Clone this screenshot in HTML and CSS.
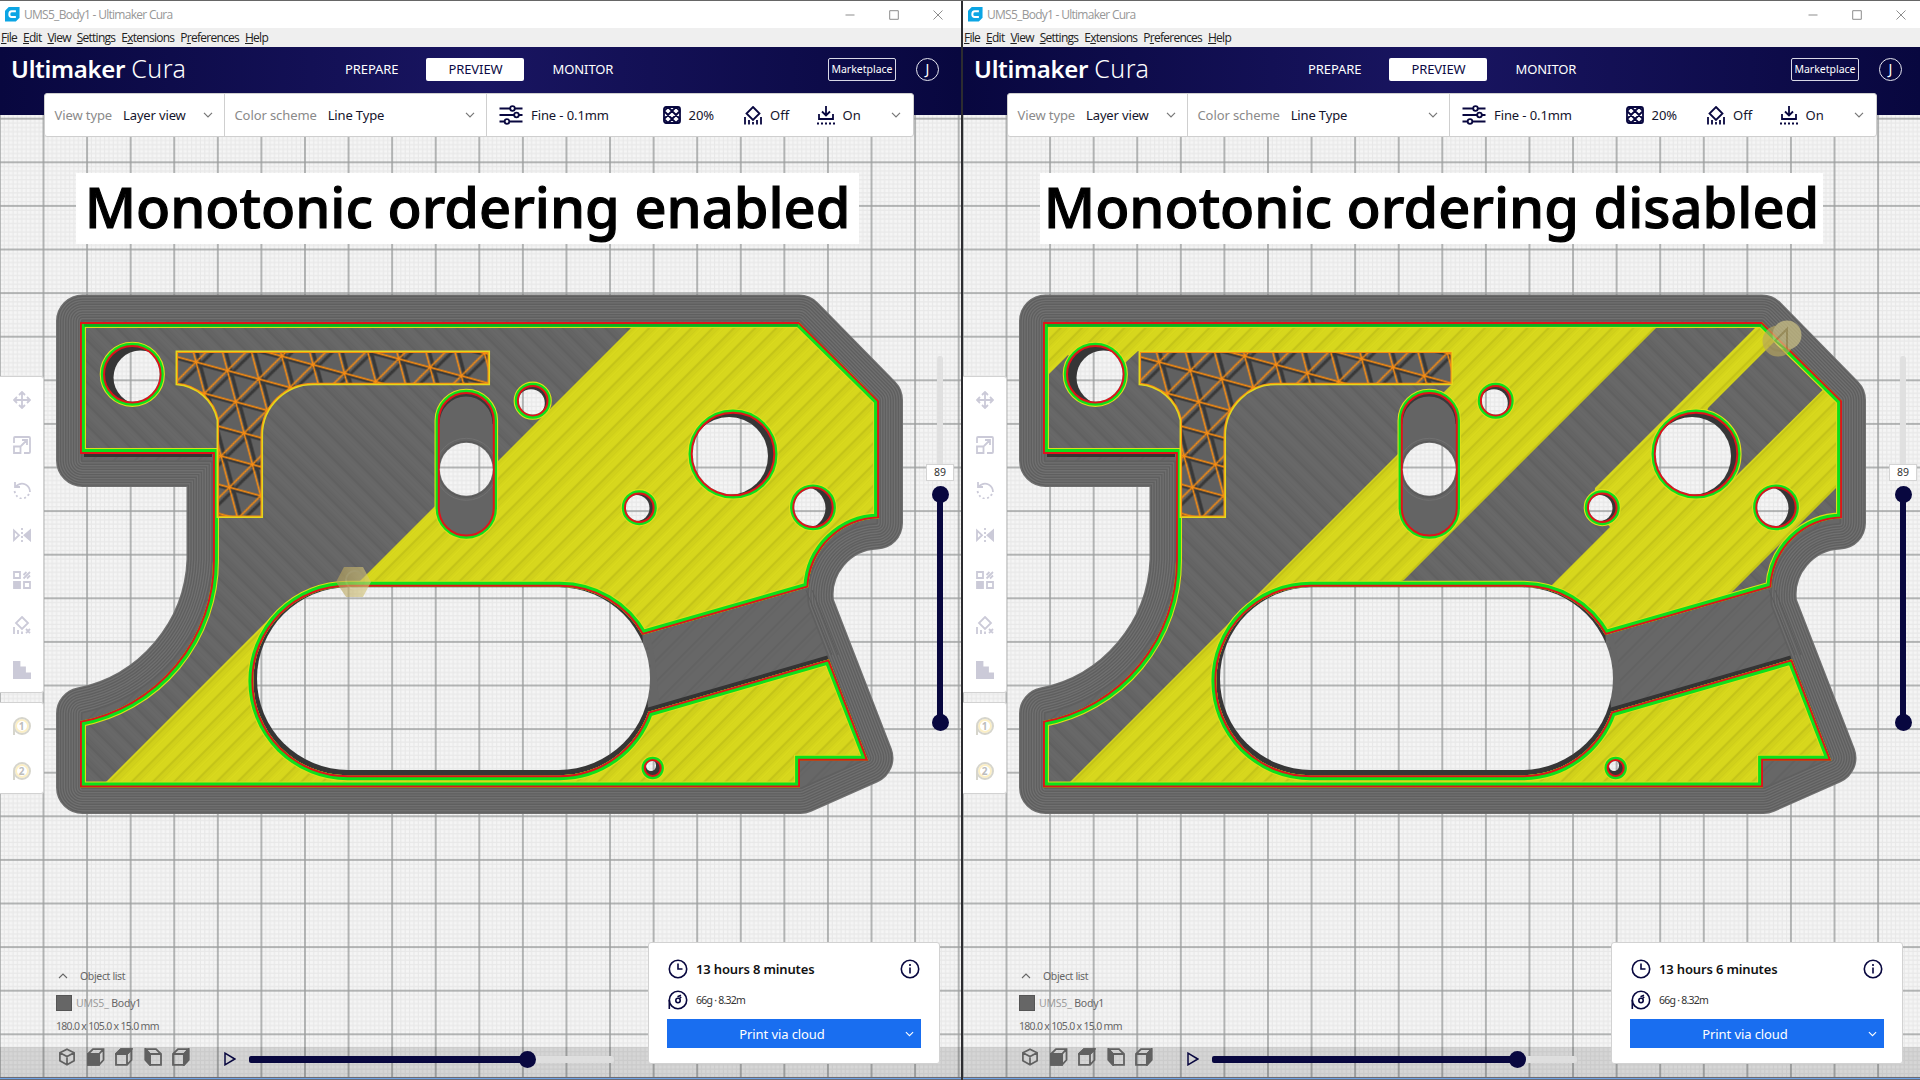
FILE: index.html
```html
<!DOCTYPE html>
<html lang="en">
<head>
<meta charset="utf-8">
<title>Ultimaker Cura</title>
<link rel="stylesheet" href="styles.css">
</head>
<body>
<svg class="defs" width="0" height="0" aria-hidden="true">
  <defs>
    <pattern id="plate" width="43.58" height="43.6" patternUnits="userSpaceOnUse" patternTransform="translate(43.5 162.3)">
      <path class="grid-minor" d="M4.36 0V43.6M8.72 0V43.6M13.07 0V43.6M17.43 0V43.6M21.79 0V43.6M26.15 0V43.6M30.5 0V43.6M34.86 0V43.6M39.22 0V43.6M0 4.36H43.6M0 8.72H43.6M0 13.08H43.6M0 17.44H43.6M0 21.8H43.6M0 26.16H43.6M0 30.52H43.6M0 34.88H43.6M0 39.24H43.6"/>
      <path class="grid-major" d="M0 0V43.6M43.58 0V43.6M0 0H43.6M0 43.6H43.6"/>
    </pattern>
    <pattern id="skin-yellow" width="15" height="15" patternUnits="userSpaceOnUse" patternTransform="rotate(45)">
      <rect width="15" height="15" fill="#d5d51b"/>
      <path d="M1 0V15" stroke="#b4b415" stroke-width="1"/>
      <path d="M3 0V15M5.2 0V15" stroke="#cbcb19" stroke-width="1"/>
      <path d="M8.5 0V15M11 0V15M13 0V15" stroke="#dada1e" stroke-width="1"/>
    </pattern>
    <pattern id="skin-gray" width="15" height="15" patternUnits="userSpaceOnUse" patternTransform="rotate(-45)">
      <rect width="15" height="15" fill="#666"/>
      <path d="M1 0V15" stroke="#5a5a5a" stroke-width="1"/>
      <path d="M3 0V15M5.2 0V15" stroke="#616161" stroke-width="1"/>
      <path d="M9 0V15M12 0V15" stroke="#6a6a6a" stroke-width="1"/>
    </pattern>
    <pattern id="skin-floor" width="15" height="15" patternUnits="userSpaceOnUse" patternTransform="rotate(45)">
      <rect width="15" height="15" fill="#676767"/>
      <path d="M1 0V15" stroke="#5c5c5c" stroke-width="1"/>
      <path d="M5 0V15" stroke="#626262" stroke-width="1"/>
    </pattern>
    <pattern id="truss-line" width="100" height="100" patternUnits="userSpaceOnUse" patternTransform="matrix(.3133 .085 .0833 .3133 176.2 342.1)">
      <path d="M50 0V100M0 50H100" stroke="#f78c12" stroke-width="5.600"/>
      <path d="M-10 110L110 -10M-10 10L10 -10M90 110L110 90" stroke="#f78c12" stroke-width="4"/>
    </pattern>
    <pattern id="truss-shade" width="100" height="100" patternUnits="userSpaceOnUse" patternTransform="matrix(.3133 .085 .0833 .3133 180.4 344.6)">
      <path d="M50 0V100M0 50H100" stroke="#383838" stroke-width="12"/>
      <path d="M-10 110L110 -10M-10 10L10 -10M90 110L110 90" stroke="#383838" stroke-width="8"/>
    </pattern>
    <linearGradient id="hexa"><stop offset="0" stop-color="#b5a15a"/><stop offset="1" stop-color="#d8ca7e"/></linearGradient>

    <path id="outline" d="M80 322H799L879 400.700V518.300A72 72 0 0 0 808.300 587.300L642.300 635A94.300 94.300 0 0 0 560 586.700H347.600A94.300 94.300 0 0 0 347.600 775.300H560A94.300 94.300 0 0 0 648.300 711.700L829 659.300L868.300 760.700H800V787.500H80V721A163 163 0 0 0 213 560V454H80Z"/>
    <path id="base" d="M82.500 321H799L876.500 400V523A72 72 0 0 0 808 606L867 758L800.500 787.500H82.500V713.500A163 163 0 0 0 213 560V460.500H82.500Z"/>
    <path id="slot" d="M642.300 635A94.300 94.300 0 0 0 560 586.700H347.600A94.300 94.300 0 0 0 347.600 775.300H560A94.300 94.300 0 0 0 648.300 711.700Z"/>
    <g id="holes">
      <circle cx="132.300" cy="374.300" r="28.300"/>
      <circle cx="532.700" cy="400.700" r="14.800"/>
      <circle cx="733" cy="454" r="41.300"/>
      <circle cx="639.300" cy="507.700" r="14.300"/>
      <circle cx="813" cy="507.300" r="19.700"/>
      <circle cx="652.700" cy="768" r="8"/>
    </g>
    <rect id="capsule" x="438.800" y="393" width="55" height="142.500" rx="27.500"/>
    <path id="truss" d="M176.300 351.300H489.300V384.500H315A51 51 0 0 0 262.300 435V517.300H217.300V420A45 45 0 0 0 176.300 384.500Z"/>
    <clipPath id="clip-body"><use href="#outline"/></clipPath>
    <clipPath id="clip-truss"><use href="#truss"/></clipPath>
    <clipPath id="clip-capsule"><use href="#capsule"/></clipPath>
    <clipPath id="clip-holes">
      <circle cx="132.300" cy="374.300" r="27.300"/><circle cx="532.700" cy="400.700" r="13.800"/><circle cx="733" cy="454" r="40.300"/><circle cx="639.300" cy="507.700" r="13.300"/><circle cx="813" cy="507.300" r="18.700"/><circle cx="652.700" cy="768" r="7"/>
    </clipPath>
    <mask id="openings" maskUnits="userSpaceOnUse" x="0" y="0" width="962" height="1080">
      <rect width="962" height="1080" fill="#fff"/>
      <rect x="257" y="587.300" width="393" height="182.700" rx="91.300"/>
      <circle cx="466.300" cy="469.300" r="26.500"/>
      <g clip-path="url(#clip-holes)">
        <circle cx="140.500" cy="377.500" r="27"/><circle cx="531" cy="403" r="13.800"/><circle cx="729" cy="456" r="39"/><circle cx="636.500" cy="508" r="13"/><circle cx="804.500" cy="508" r="21"/><ellipse cx="651" cy="765.500" rx="5" ry="5.500"/>
      </g>
    </mask>

    <g id="body-rims" fill="none">
      <g stroke="#dcdc1a" stroke-width="12"><use href="#outline"/></g>
      <g stroke="#0ce01c" stroke-width="9.800"><use href="#outline"/></g>
      <g stroke="#e0141a" stroke-width="3.800"><use href="#outline"/></g>
    </g>
    <g id="hole-rims" fill="none">
      <g stroke="#dede1c" stroke-width="8.600"><use href="#holes"/><use href="#capsule"/></g>
      <g stroke="#0ce01c" stroke-width="6.400"><use href="#holes"/><use href="#capsule"/></g>
    </g>

    <symbol id="i-app" viewBox="0 0 16 16"><path d="M4 0H15.5V11.5L11.5 15.5H0V4Z" fill="#0ba5e4" stroke="none"/><path d="M11.6 4.6H7.2Q4.6 4.6 4.6 7.6T7.2 10.7H11.6" fill="none" stroke="#fff" stroke-width="2.1"/></symbol>
    <symbol id="i-down" viewBox="0 0 10 6"><path d="M1 .8L5 4.8L9 .8"/></symbol>
    <symbol id="i-up" viewBox="0 0 10 6"><path d="M1 5L5 1L9 5"/></symbol>
    <symbol id="i-min" viewBox="0 0 10 10"><path d="M.5 5H9.5"/></symbol>
    <symbol id="i-max" viewBox="0 0 10 10"><path d="M.7 .7H9.3V9.3H.7Z"/></symbol>
    <symbol id="i-close" viewBox="0 0 10 10"><path d="M.5 .5L9.5 9.5M9.5 .5L.5 9.5"/></symbol>
    <symbol id="i-profile" viewBox="0 0 24 20"><path d="M.5 3.5H11M16 3.5H23.5M.5 10H15M20 10H23.5M.5 16.5H5.5M10.500 16.5H23.5"/><circle cx="13.5" cy="3.500" r="2.3"/><circle cx="17.5" cy="10" r="2.3"/><circle cx="8" cy="16.5" r="2.3"/></symbol>
    <symbol id="i-infill" viewBox="0 0 18 18"><rect x="1" y="1" width="16" height="16" rx="2"/><path d="M1 5L5 1M1 13L13 1M5 17L17 5M13 17L17 13M13 1L17 5M5 1L17 13M1 5L13 17M1 13L5 17"/></symbol>
    <symbol id="i-support" viewBox="0 0 18 19"><path d="M9 1L15.500 7.500L9 14L2.500 7.500Z"/><path d="M1 11V18.500M5 14V18.500M9 16V18.500M13 14V18.500M17 11V18.500"/></symbol>
    <symbol id="i-adhesion" viewBox="0 0 18 19"><path d="M9 0V9M5 5.500L9 9.500L13 5.500M2 8V13H16V8"/><path d="M0 17.500H18" stroke-dasharray="2 2"/></symbol>
    <symbol id="i-move" viewBox="0 0 18 18"><path d="M9 1V17M1 9H17M6 4L9 1L12 4M6 14L9 17L12 14M4 6L1 9L4 12M14 6L17 9L14 12"/></symbol>
    <symbol id="i-scale" viewBox="0 0 18 18"><path d="M1 7V2Q1 1 2 1H16Q17 1 17 2V16Q17 17 16 17H11M1 10.500H7.500V17H1ZM8 10L14 4M9 4H14V9"/></symbol>
    <symbol id="i-rotate" viewBox="0 0 18 18"><path d="M2 1V6H7M2.500 6Q7 1 12.500 3.500Q17 6 17 11"/><path d="M16 13Q13 18 8 17.500Q3 16.500 1.500 10" stroke-dasharray="2 2.500"/></symbol>
    <symbol id="i-mirror" viewBox="0 0 18 14"><path d="M1 2.500V12L6 7.200Z"/><path d="M17.500 2V12.500L11.500 7.200Z" fill="currentColor"/><path d="M9 0V14" stroke-dasharray="2 2"/></symbol>
    <symbol id="i-mesh" viewBox="0 0 18 18"><path d="M1 1H7V7H1ZM11 11H17V17H11Z"/><path d="M1 11H7V17H1Z" fill="currentColor"/><path d="M10.500 4L13.500 1M10.500 7.500L17 1M14 7.500L17 4.500"/></symbol>
    <symbol id="i-blocker" viewBox="0 0 18 18"><path d="M9 1L15 7L9 13L3 7Z"/><path d="M1 11V18M5 14V18M9 15.500V18M13 13L17 17M17 13L13 17"/></symbol>
    <symbol id="i-stairs" viewBox="0 0 18 18"><path d="M.5 .5H6.500V6.500H12V12.500H17.500V17.500H.5Z" fill="currentColor"/></symbol>
    <symbol id="i-cube" viewBox="0 0 18 19"><path d="M9 1.200L16.500 5V13.500L9 17.800L1.500 13.500V5ZM1.500 5L9 9L16.500 5M9 9V17.800"/></symbol>
    <symbol id="i-front" viewBox="0 0 18 18"><path d="M1 6L6 1.200H16.500V12L12 16.800H1ZM1 6H12V16.800M12 6L16.500 1.200"/><path d="M1 6H12V16.800H1Z" fill="currentColor"/></symbol>
    <symbol id="i-top" viewBox="0 0 18 18"><path d="M1 6L6 1.200H16.500V12L12 16.800H1ZM1 6H12V16.800M12 6L16.500 1.200"/><path d="M1 6L6 1.200H16.500L12 6Z" fill="currentColor"/></symbol>
    <symbol id="i-left" viewBox="0 0 18 18"><path d="M17 6L12 1.200H1.500V12L6 16.800H17ZM17 6H6V16.800M6 6L1.500 1.200"/><path d="M6 6L1.500 1.200V12L6 16.800Z" fill="currentColor"/></symbol>
    <symbol id="i-right" viewBox="0 0 18 18"><path d="M1 6L6 1.200H16.500V12L12 16.800H1ZM1 6H12V16.800M12 6L16.500 1.200"/><path d="M12 6L16.500 1.200V12L12 16.800Z" fill="currentColor"/></symbol>
    <symbol id="i-play" viewBox="0 0 12 14"><path d="M1 1.200L10.800 7L1 12.800Z"/></symbol>
    <symbol id="i-clock" viewBox="0 0 20 20"><circle cx="10" cy="10" r="8.700"/><path d="M10 4.500V10H14.500"/></symbol>
    <symbol id="i-info" viewBox="0 0 20 20"><circle cx="10" cy="10" r="8.700"/><path d="M10 8.500V14.500M10 5V7"/></symbol>
    <symbol id="i-spool" viewBox="0 0 20 20"><circle cx="10" cy="10" r="8.700"/><path d="M1.300 10V19"/><circle cx="10" cy="10.500" r="2.200"/><path d="M9.500 6.800L13 5.200M11.500 8.500L13.200 7"/></symbol>
  </defs>
</svg>
<main class="screen" id="screen"></main>
<script src="app.js"></script>
</body>
</html>
```
FILE: styles.css
```css
* { box-sizing: border-box; }
body { margin: 0; width: 1920px; height: 1080px; overflow: hidden; background: #2c2c30; font-family: "Noto Sans", "Open Sans", sans-serif; color: #14142c; }
.defs { position: absolute; }
.screen { display: grid; grid-template-columns: 961px 957px; column-gap: 2px; height: 1080px; border-top: 1px solid #666; }
.pane { position: relative; display: flex; flex-direction: column; overflow: hidden; height: 1079px; background: #f4f4f4; }
svg.icon { display: block; flex: none; fill: none; stroke: currentColor; stroke-width: 1.8; overflow: visible; }
.text { white-space: pre; }

.titlebar { display: flex; align-items: center; height: 27px; background: #fff; padding-left: 5px; color: #979797; font: 12px "Open Sans", sans-serif; position: relative; z-index: 2; }
.titlebar .name { margin-left: 4px; flex: 1; letter-spacing: -.72px; }
.winbtns { display: flex; gap: 34px; margin-right: 18.500px; color: #8d8d8d; }
.pane:last-child .winbtns { margin-right: 14.500px; }
.winbtns .icon { stroke-width: 1; }
.menubar { display: flex; align-items: center; gap: 6px; height: 19px; padding-left: 1px; background: #efefef; color: #222; font: 12px "Open Sans", sans-serif; letter-spacing: -.74px; position: relative; z-index: 2; }
.menubar u { text-underline-offset: 1px; }
.header { display: grid; grid-template-columns: 345px 1fr auto; height: 68px; padding-bottom: 23px; align-items: center; background: linear-gradient(90deg, #08073f, #191561 50%, #08073f); color: #fff; position: relative; z-index: 2; }
.brand { padding-left: 11px; font-size: 24px; letter-spacing: -.3px; font-weight: 600; line-height: 26px; padding-bottom: 2px; white-space: nowrap; }
.brand span { font-weight: 300; font-size: 25px; letter-spacing: .5px; }
.nav { display: flex; align-items: center; font-size: 13px; line-height: 23px; letter-spacing: -.08px; }
.nav .active { width: 98px; margin: 0 28px 0 28px; background: #fff; color: #0b0a44; text-align: center; border-radius: 2px; }
.account { display: flex; align-items: center; gap: 20px; margin-right: 22px; }
.pane:last-child .account { margin-right: 18px; }
.market { width: 68px; height: 23px; border: 1px solid #d8d8e6; border-radius: 2px; font-size: 10.500px; line-height: 21px; text-align: center; }
.avatar { width: 23px; height: 23px; border: 1px solid #e6e6f0; border-radius: 50%; font-size: 14px; line-height: 20px; text-align: center; }

.toolbar { position: absolute; z-index: 3; left: 43.500px; top: 92px; width: 870px; height: 44px; display: grid; grid-template-columns: 179px 262.500px 1fr; background: #fff; border: 1px solid #cfcfcf; border-radius: 3px; font-size: 13px; }
.cell { display: flex; align-items: center; padding: 0 11px 0 10px; }
.cell + .cell { border-left: 1px solid #cfcfcf; }
.cell .label { color: #8a8a8a; margin-right: 11px; letter-spacing: -.1px; }
.cell .label + .text { letter-spacing: -.15px; }
.cell .icon { color: #08073f; }
.cell .chev { margin-left: auto; color: #777; stroke-width: 1.2; }
.settings { padding: 0 11.500px 0 12px; }
.settings .text { margin-left: 8px; }
.settings .profile { width: 131.500px; letter-spacing: -.1px; }
.settings .infill { width: 55.500px; }
.settings .support { width: 46.500px; }

.stage { position: absolute; left: 0; top: -1px; display: block; }
.grid-minor { stroke: #e8e8e8; stroke-width: 1.2; fill: none; }
.grid-major { stroke: #9c9e9e; stroke-width: 1.500; fill: none; }
.caption { position: absolute; z-index: 2; left: 76px; top: 172px; width: 783px; height: 71px; margin: 0; background: #fff; color: #000; font-weight: 500; font-size: 56px; line-height: 66px; text-align: center; white-space: nowrap; -webkit-text-stroke: 1.1px #000; }
.pane:last-child .caption { left: 77px; }

.tools { position: absolute; left: 0; top: 375px; width: 44px; display: flex; flex-direction: column; gap: 9px; }
.group { display: flex; flex-direction: column; align-items: center; background: #fff; border: 1px solid #d2d2d2; border-left: 0; border-radius: 0 3px 3px 0; color: #cbcad8; }
.group .slot { height: 45px; display: flex; align-items: center; }
.extruder { position: relative; width: 18px; height: 18px; border: 2px solid #d6d5cc; border-radius: 50%; box-shadow: inset 0 0 0 2px #fcefc4; color: #bdbdbd; font-size: 10px; font-weight: 700; line-height: 14px; text-align: center; }
.extruder::before { content: ""; position: absolute; left: -2px; top: 7px; width: 2px; height: 9px; background: #d6d5cc; }

.layers { position: absolute; left: 926px; top: 355px; width: 28px; height: 375px; display: flex; flex-direction: column; align-items: center; }
.layers .rest { width: 6px; height: 108px; background: #e0e0e0; border-radius: 3px 3px 0 0; }
.layers .value { width: 28px; height: 17px; background: #fff; border: 1px solid #d4d4d4; font-size: 10.500px; line-height: 15px; text-align: center; color: #333; }
.knob { width: 17px; height: 17px; border-radius: 50%; background: #08073f; flex: none; }
.layers .knob { margin-top: 5px; }
.layers .range { width: 6px; flex: 1; background: #08073f; margin: -2px 0 -7px; }

.objects { position: absolute; left: 56px; top: 967px; width: 180px; font-size: 10.500px; color: #666; display: flex; flex-direction: column; }
.objects .row { display: flex; align-items: center; height: 16px; }
.objects .list { gap: 12px; padding-left: 2px; letter-spacing: -.35px; }
.objects .icon { stroke-width: 1.1; }
.objects .item { margin-top: 11px; gap: 4px; letter-spacing: -.2px; }
.objects .size { margin-top: 7px; letter-spacing: -.7px; }
.swatch { width: 16px; height: 16px; background: #666; border: 1px solid #555; }
.faint { color: #9d9d9d; }
.footer { position: absolute; left: 0; right: 0; top: 1046px; height: 31px; display: flex; align-items: center; background: rgba(0,0,0,.125); color: #606060; }
.views { display: flex; gap: 10.600px; margin: -11px 0 0 58px; }
.footer .play { margin: -7px 13px 0 34px; color: #08073f; stroke-width: 1.500; }
.track { display: flex; align-items: center; width: 365px; height: 7px; background: #dedede; border-radius: 3px; margin-top: -7px; }
.track .done { height: 7px; background: #08073f; border-radius: 2px 0 0 2px; margin-right: -9px; }
.edge { position: absolute; left: 0; right: 0; bottom: 0; height: 3px; background: #6ea3e6; border: solid #6b6b74; border-width: 1px 0; }

.card { position: absolute; left: 648px; top: 941px; width: 292px; height: 122px; padding: 16px 18px 14px; background: #fff; border: 1px solid #d2d2d2; border-radius: 3px; display: flex; flex-direction: column; }
.card .icon { color: #08073f; stroke-width: 1.600; }
.card .row { display: flex; align-items: center; gap: 8px; height: 20px; padding: 0 1px; }
.card .time { flex: 1; font-size: 13px; font-weight: 600; color: #111; letter-spacing: -.15px; }
.card .material { margin-top: 11px; font-size: 10.500px; color: #333; letter-spacing: -.75px; }
.print { display: flex; align-items: center; height: 29px; margin-top: 9px; background: #196ef0; color: #fff; font-size: 13px; letter-spacing: -.1px; }
.print .text { flex: 1; padding-right: 8px; text-align: center; }
.print .icon { color: #fff; stroke-width: 1.200; margin-right: 7px; }
```
FILE: app.js
```js
const icon = (name, w, h, cls = "") =>
  `<svg class="icon ${cls}" width="${w}" height="${h}"><use href="#i-${name}"/></svg>`;

// Concentric brim lines, from the outermost to the innermost.
const brim = () => {
  let out = "";
  for (let w = 53, i = 0; w > 2; w -= 2.6, i++) {
    out += `<use href="#base" fill="none" stroke="${i % 2 ? "#5f5f5f" : "#707070"}" stroke-width="${w.toFixed(1)}" stroke-linejoin="round"/>`;
  }
  return out;
};

const model = (pane) => `
<svg class="stage" width="962" height="1080" viewBox="0 0 962 1080">
  <rect width="962" height="1080" fill="#f5f5f5"/>
  <rect width="962" height="1080" fill="url(#plate)"/>
  <g mask="url(#openings)">
    ${brim()}
    <use href="#base" fill="url(#skin-floor)"/>
    <path d="M806 590L832 655M812 590L838 655" stroke="#5b5b5b" fill="none"/>
    <use href="#slot" fill="#363636"/>
    <path d="M645 637L651 660V690L647 712H660L655 660L650 635Z" fill="#666"/>
    <path d="M84 454.500H212M647 710.500L828 658" stroke="#343434" stroke-width="5" fill="none"/>
    <g clip-path="url(#clip-body)">
      <use href="#outline" fill="url(#skin-gray)"/>
      ${pane.skin.map((p) => `<polygon points="${p}" fill="url(#skin-yellow)"/>`).join("")}
      <polygon points="829,655 648,707 620,760 560,781 560,790 880,790 880,760" fill="url(#skin-yellow)"/>
      <use href="#body-rims"/>
      <path d="M84 325.300H798" stroke="#0fb01f" stroke-width="2.500"/>
    </g>
    <g clip-path="url(#clip-truss)">
      <use href="#truss" fill="#606060"/>
      <use href="#truss" fill="url(#truss-shade)"/>
      <use href="#truss" fill="url(#truss-line)"/>
      <use href="#truss" fill="none" stroke="#f78c12" stroke-width="3.600"/>
    </g>
    <use href="#truss" fill="none" stroke="#e2d81c" stroke-width="1.500"/>
    <use href="#hole-rims"/>
    <use href="#holes" fill="#363636" stroke="#e0141a" stroke-width="2"/>
    <g clip-path="url(#clip-capsule)">
      <use href="#capsule" fill="#646464"/>
      <path d="M438 424A28 29 0 0 1 494 424" fill="none" stroke="#3a3a3a" stroke-width="3"/>
      <circle cx="466.300" cy="469.300" r="31" fill="none" stroke="#717171"/>
      <circle cx="466.300" cy="469.300" r="28" fill="none" stroke="#575757"/>
    </g>
    <use href="#capsule" fill="none" stroke="#e0141a" stroke-width="2"/>
  </g>
  ${pane.nozzle}
</svg>`;

const paneHtml = (pane) => `
<section class="pane">
  ${model(pane)}
  <div class="titlebar">${icon("app", 15, 15, "app")}<span class="name">UMS5_Body1 - Ultimaker Cura</span>
    <div class="winbtns">${icon("min", 10, 10)}${icon("max", 10, 10)}${icon("close", 10, 10)}</div></div>
  <nav class="menubar"><span><u>F</u>ile</span><span><u>E</u>dit</span><span><u>V</u>iew</span><span><u>S</u>ettings</span><span>E<u>x</u>tensions</span><span>P<u>r</u>eferences</span><span><u>H</u>elp</span></nav>
  <header class="header">
    <div class="brand">Ultimaker <span>Cura</span></div>
    <div class="nav"><span>PREPARE</span><span class="active">PREVIEW</span><span>MONITOR</span></div>
    <div class="account"><div class="market">Marketplace</div><div class="avatar">J</div></div>
  </header>
  <div class="toolbar">
    <div class="cell"><span class="text label">View type</span><span class="text">Layer view</span>${icon("down", 10, 6, "chev")}</div>
    <div class="cell"><span class="text label">Color scheme</span><span class="text">Line Type</span>${icon("down", 10, 6, "chev")}</div>
    <div class="cell settings">${icon("profile", 24, 20)}<span class="text profile">Fine - 0.1mm</span>${icon("infill", 18, 18)}<span class="text infill">20%</span>${icon("support", 18, 19)}<span class="text support">Off</span>${icon("adhesion", 18, 19)}<span class="text">On</span>${icon("down", 10, 6, "chev")}</div>
  </div>
  <h1 class="caption">${pane.caption}</h1>
  <aside class="tools">
    <div class="group">${[["move", 18], ["scale", 18], ["rotate", 18], ["mirror", 14], ["mesh", 18], ["blocker", 18], ["stairs", 18]].map(([n, h]) => `<div class="slot">${icon(n, 18, h)}</div>`).join("")}</div>
    <div class="group"><div class="slot"><div class="extruder">1</div></div><div class="slot"><div class="extruder">2</div></div></div>
  </aside>
  <div class="layers"><div class="rest"></div><div class="value">89</div><div class="knob"></div><div class="range"></div><div class="knob"></div></div>
  <div class="footer">
    <div class="views">${["cube", "front", "top", "left", "right"].map((n) => icon(n, 18, 18)).join("")}</div>
    ${icon("play", 12, 14, "play")}
    <div class="track"><div class="done" style="width:${pane.progress}px"></div><div class="knob"></div></div>
  </div>
  <div class="objects">
    <div class="row list">${icon("up", 10, 6)}<span>Object list</span></div>
    <div class="row item"><div class="swatch"></div><span><span class="faint">UMS5_</span> Body1</span></div>
    <div class="row size">180.0 x 105.0 x 15.0 mm</div>
  </div>
  <div class="card">
    <div class="row">${icon("clock", 20, 20)}<span class="time">${pane.time}</span>${icon("info", 20, 20)}</div>
    <div class="row material">${icon("spool", 20, 20)}<span>66g · 8.32m</span></div>
    <div class="print"><span class="text">Print via cloud</span>${icon("down", 9, 6)}</div>
  </div>
  <div class="edge"></div>
</section>`;

const panes = [
  {
    caption: "Monotonic ordering enabled", time: "13 hours 8 minutes", progress: 279,
    skin: [
      "637,322 498,461 466,480 434,507 345,596 560,700 642,640 900,560 900,322",
      "280,608 99,789 700,789 620,700 350,680",
    ],
    nozzle: `<g opacity=".62" fill="url(#hexa)"><path d="M344 567H363L371 582L363 597H346L336 582Z"/><circle cx="355" cy="580" r="9" fill="none" stroke="#cbbd78" stroke-width="2"/></g>`,
  },
  {
    caption: "Monotonic ordering disabled", time: "13 hours 6 minutes", progress: 306,
    skin: [
      "80,320 80,380 105,355 132,374 163,362 175,351 489,351 489,384 481,392 466,421 434,455 99,790 620,790 620,700 350,680 300,650 441,580 700,321",
      "798,322 632,488 630,508 647,527 580,594 640,660 768,593 830,531 900,461 900,350 772,477 733,454 745,408 803,350 830,323",
    ],
    nozzle: `<g opacity=".66"><circle cx="815" cy="341" r="15.500" fill="#b8a75e"/><circle cx="824" cy="335" r="14.500" fill="#d6ca88"/><path d="M812 341L824 329V350ZM805 345Q812 353 824 350" fill="none" stroke="#b19f55" stroke-width="2"/></g>`,
  },
];

document.getElementById("screen").innerHTML = panes.map(paneHtml).join("");
```
